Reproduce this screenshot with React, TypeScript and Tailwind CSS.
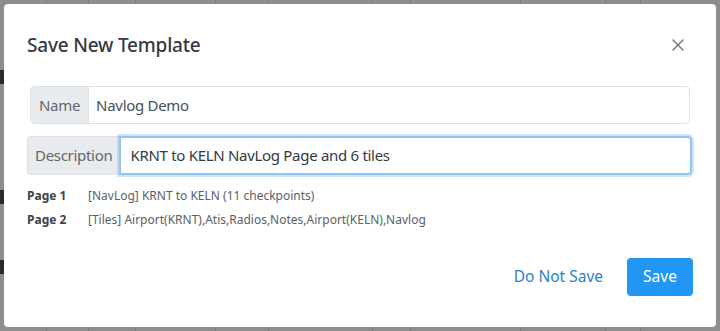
import { X } from "lucide-react";

const font = { fontFamily: '"Noto Sans", "Open Sans", Arial, sans-serif' };

const pages = [
  { label: "Page 1", text: "[NavLog] KRNT to KELN (11 checkpoints)" },
  { label: "Page 2", text: "[Tiles] Airport(KRNT),Atis,Radios,Notes,Airport(KELN),Navlog" },
];

const bgLines = [46, 88, 135, 215, 268, 372, 410, 520, 605, 640, 720];

export default function App() {
  return (
    <div className="relative w-[720px] h-[331px] bg-[#8e8e8e] overflow-hidden" style={font}>
      {/* dimmed table behind the dialog */}
      <div className="absolute inset-0">
        {bgLines.map((x) => (
          <div key={x} className="absolute top-0 h-full w-px bg-[#7a7a7a]" style={{ left: x }} />
        ))}
        <div className="absolute left-0 top-[70px] w-[4px] h-[14px] bg-[#2a2a2a]" />
        <div className="absolute left-0 top-[190px] w-[4px] h-[14px] bg-[#2a2a2a]" />
        <div className="absolute left-0 top-[260px] w-[4px] h-[14px] bg-[#2a2a2a]" />
      </div>

      <div className="relative p-1 h-full">
        <div className="bg-white rounded-[4px] h-full flex flex-col pl-[23px] pr-[24px] pt-[27px] pb-[31px]">
          <div className="flex items-center justify-between">
            <h4 className="text-[19px] leading-[28px] text-[#343a40] font-medium tracking-[-0.2px]">
              Save New Template
            </h4>
            <button className="text-[#6c757d] mr-[4px] mt-[-1px]">
              <X size={20} strokeWidth={1.6} />
            </button>
          </div>

          <div className="mt-[27px] flex h-[38px] border border-[#dee2e6] rounded-[4px] ml-[3px] mr-[2px]">
            <span className="bg-[#e9ecef] border-r border-[#dee2e6] px-[8px] flex items-center text-[15px] tracking-[-0.3px] text-[#5f666d] rounded-l-[4px]">
              Name
            </span>
            <input
              className="flex-1 px-[7px] text-[15px] tracking-[-0.3px] text-[#495057] outline-none rounded-r-[4px]"
              defaultValue="Navlog Demo"
            />
          </div>

          <div className="mt-[12px] flex h-[39px]">
            <span className="bg-[#e9ecef] border border-[#dee2e6] border-r-0 px-[7px] flex items-center text-[15px] tracking-[-0.3px] text-[#5f666d] rounded-l-[4px]">
              Description
            </span>
            <input
              className="flex-1 px-[9px] text-[15px] tracking-[-0.3px] text-[#343a40] border-2 border-[#8ec5f5] rounded-r-[4px] outline-none shadow-[0_0_0_2px_rgba(120,180,240,0.35)]"
              defaultValue="KRNT to KELN NavLog Page and 6 tiles"
            />
          </div>

          <div className="mt-[9px] flex flex-col">
            {pages.map((p) => (
              <div key={p.label} className="flex items-center h-[24px] text-[12px]">
                <span className="w-[61px] font-bold text-[#3d4349]">{p.label}</span>
                <span className="text-[#5a6167]">{p.text}</span>
              </div>
            ))}
          </div>

          <div className="mt-auto flex items-center justify-end gap-[24px] mr-[-1px]">
            <button className="text-[15.5px] text-[#2f7fcb]">Do Not Save</button>
            <button className="h-[38px] w-[66px] rounded-[4px] bg-[#2196f3] text-white text-[15.5px]">
              Save
            </button>
          </div>
        </div>
      </div>
    </div>
  );
}
